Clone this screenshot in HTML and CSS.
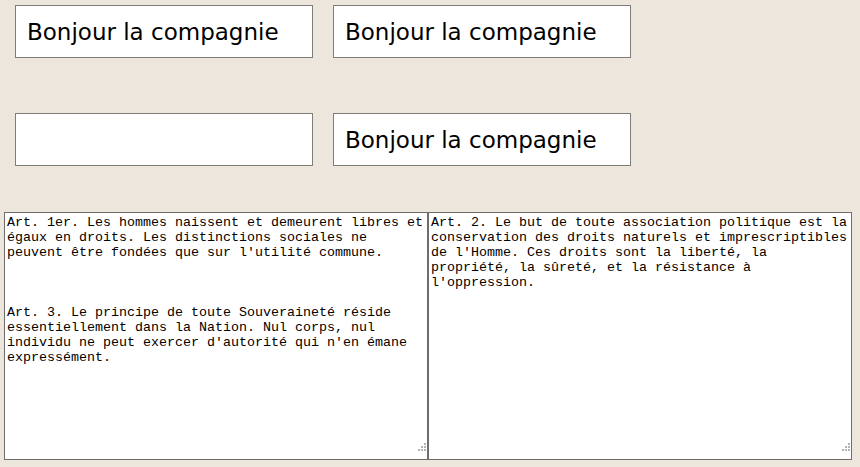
FILE: index.html
```html
<!DOCTYPE html>
<html lang="fr">
<head>
    <meta charset="UTF-8">
    <title>Bonjour la compagnie</title>
    <link rel="stylesheet" href="styles.css">
</head>
<body>
    <div class="fields">
        <input class="field" type="text" value="Bonjour la compagnie">
        <input class="field" type="text" value="Bonjour la compagnie">
        <input class="field" type="text" value="">
        <input class="field" type="text" value="Bonjour la compagnie">
    </div>
    <div class="articles">
        <div class="article-wrap">
            <textarea class="article">Art. 1er. Les hommes naissent et demeurent libres et égaux en droits. Les distinctions sociales ne peuvent être fondées que sur l'utilité commune.



Art. 3. Le principe de toute Souveraineté réside essentiellement dans la Nation. Nul corps, nul individu ne peut exercer d'autorité qui n'en émane expressément.</textarea>
        </div>
        <div class="article-wrap">
            <textarea class="article">Art. 2. Le but de toute association politique est la conservation des droits naturels et imprescriptibles de l'Homme. Ces droits sont la liberté, la propriété, la sûreté, et la résistance à l'oppression.</textarea>
        </div>
    </div>
</body>
</html>
```

FILE: styles.css
```css
:root {
    --page-bg: #ece6dc;
    --field-border: #7f7d78;
    --grip: #b4b4b4;
}

* {
    box-sizing: border-box;
}

body {
    margin: 0;
    padding: 5px 0 0 4px;
    background: var(--page-bg);
    font-family: "DejaVu Sans", Verdana, sans-serif;
}

.fields {
    display: grid;
    grid-template-columns: 298px 298px;
    column-gap: 20px;
    row-gap: 55px;
    margin-left: 11px;
}

.field {
    width: 298px;
    height: 53px;
    margin: 0;
    padding: 0 11px;
    border: 1px solid var(--field-border);
    background: #ffffff;
    color: #000000;
    font-family: "DejaVu Sans", Verdana, sans-serif;
    font-size: 23px;
    outline: none;
}

.articles {
    display: flex;
    margin-top: 46px;
}

.article-wrap {
    position: relative;
    display: flex;
}

/* dotted resize grip in the corner */
.article-wrap::after {
    content: "";
    position: absolute;
    right: 8px;
    bottom: 9px;
    width: 2px;
    height: 2px;
    background: var(--grip);
    box-shadow:
        3px 0 var(--grip),
        6px 0 var(--grip),
        3px -3px var(--grip),
        6px -3px var(--grip),
        6px -6px var(--grip);
    pointer-events: none;
}

.article {
    width: 424px;
    height: 248px;
    margin: 0;
    padding: 2px;
    border: 1px solid #6f6d69;
    background: #ffffff;
    color: #000000;
    font-family: "Liberation Mono", "Courier New", monospace;
    font-size: 13.333px;
    line-height: 15px;
    overflow: hidden;
    outline: none;
    resize: none;
}
```
